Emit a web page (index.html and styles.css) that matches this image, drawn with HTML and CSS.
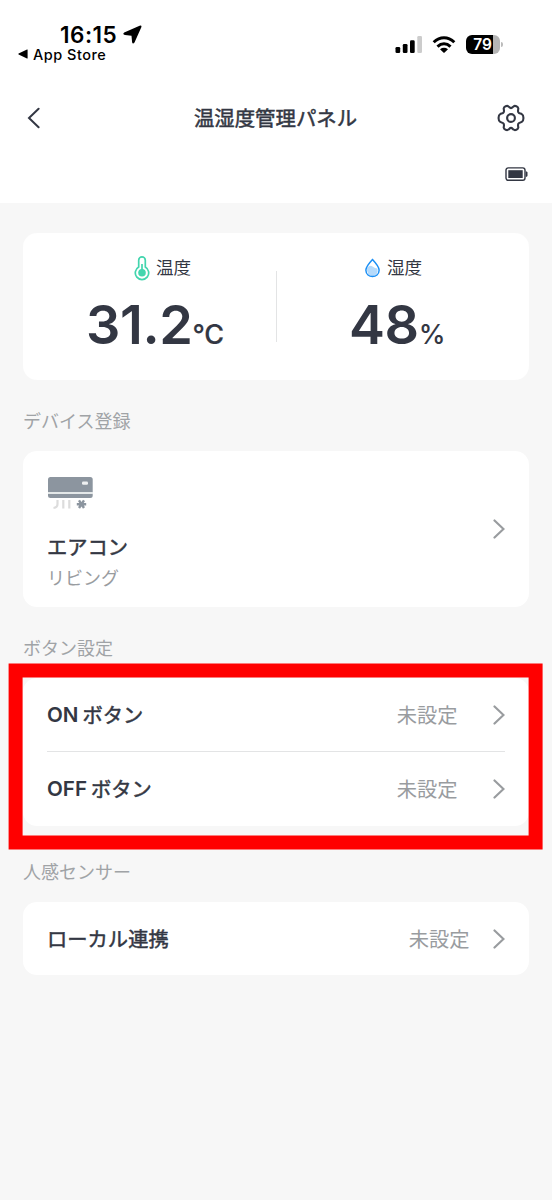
FILE: index.html
```html
<!DOCTYPE html>
<html lang="ja">
<head>
<meta charset="utf-8">
<meta name="viewport" content="width=device-width, initial-scale=1">
<title>温湿度管理パネル</title>
<link rel="stylesheet" href="styles.css">
</head>
<body>
<div class="screen">
  <header class="header">
    <div class="status">
      <div class="status-left">
        <div class="clock"><span class="clock-time">16:15</span>
          <svg class="location" width="19" height="19" viewBox="0 0 19 19"><path d="M16.600 0.800Q19.200 0 18.200 2.600L11.500 17.600Q9.700 19.800 9.100 17.200L8.500 10.800L2 10.100Q-0.900 9.200 1.200 7.500Z"/></svg>
        </div>
        <div class="back-app">
          <svg width="10" height="10" viewBox="0 0 10 10"><path d="M9.600 0.700V9.300Q9.600 9.700 9 9.400L0.600 5.400Q0 5 0.600 4.600L9 0.600Q9.600 0.300 9.600 0.700Z"/></svg>
          <span>App Store</span>
        </div>
      </div>
      <div class="status-right">
        <svg class="signal" width="28" height="18" viewBox="0 0 28 18"><rect x="0.500" y="11" width="4.700" height="6" rx="1.300"/><rect x="7.800" y="8" width="4.700" height="9" rx="1.300"/><rect x="15" y="4.300" width="4.700" height="12.700" rx="1.300"/><rect class="faint" x="22.300" y="0" width="4.700" height="17" rx="1.300"/></svg>
        <svg class="wifi" width="24" height="18" viewBox="0 0 24 18"><path class="arc" d="M1.700 6.300Q6.400 1.700 12 1.700T22.300 6.300M5.500 10.600Q8.500 7.700 12 7.700T18.500 10.600"/><path d="M8 13.200Q12 10.400 16 13.200L12.600 16.600Q12 17.100 11.400 16.600Z"/></svg>
        <div class="phone-battery"><span class="phone-battery-body">79</span><span class="phone-battery-tip"></span></div>
      </div>
    </div>
    <nav class="nav">
      <svg class="back" width="14" height="24" viewBox="0 0 14 24"><path d="M12.600 2.800L3 12L12.600 21.200"/></svg>
      <h1 class="title">温湿度管理パネル</h1>
      <svg class="gear" width="28" height="28" viewBox="0 0 28 28"><path d="M11.300 2.400C12.600 3 12.500 4.100 14 4.100S15.400 3 16.700 2.400C18 1.200 21 2.600 21.300 4.400C21.300 5.800 20.600 6.300 21.300 8.200C22.200 9.800 23.600 9.300 24.800 10.100C27 11.300 27 16.700 24.800 17.900C23.600 18.700 22.200 18.200 21.300 19.800C20.600 21.700 21.300 22.200 21.300 23.600C21 25.400 18 26.800 16.700 25.600C15.400 25 15.500 23.900 14 23.900S12.600 25 11.300 25.600C10 26.800 7 25.400 6.700 23.600C6.700 22.200 7.400 21.700 6.700 19.800C5.800 18.200 4.400 18.700 3.200 17.900C1 16.700 1 11.300 3.200 10.100C4.400 9.300 5.800 9.800 6.700 8.200C7.400 6.300 6.700 5.800 6.700 4.400C7 2.600 10 1.200 11.300 2.400Z"/><circle cx="14" cy="14" r="3.900"/></svg>
    </nav>
    <div class="device-status">
      <svg width="23" height="14" viewBox="0 0 23 14"><rect class="shell" x="1" y="0.900" width="19" height="12.400" rx="2.200"/><rect class="charge" x="3.300" y="3.200" width="14.400" height="7.800"/><path class="charge" d="M20.800 4.300Q22.500 4.500 22.500 5.500V8.700Q22.500 9.700 20.800 9.900Z"/></svg>
    </div>
  </header>

  <main class="content">
    <section class="card readings">
      <div class="reading temp">
        <div class="reading-label">
          <svg width="16" height="25" viewBox="0 0 16 25"><path class="green-line" d="M4.700 11V4.200A3.300 3.300 0 0 1 11.300 4.200V11A6.700 6.700 0 1 1 4.700 11Z"/><circle class="green-fill" cx="8" cy="16.700" r="3.800"/><path class="green-line" d="M8 8V15"/></svg>
          <span>温度</span>
        </div>
        <div class="value"><span class="number">31.2</span><span class="unit">°C</span></div>
      </div>
      <div class="reading humid">
        <div class="reading-label">
          <svg width="15" height="20" viewBox="0 0 15 20"><path class="water" d="M2 10Q5 6.500 7.500 8.500T12.500 10.500Q13.500 17.500 7.500 18Q1.500 17.500 2 10Z"/><path class="drop" d="M7.500 1.500Q14.300 8.800 14.100 12.200C13.900 20.500 1.100 20.500 .9 12.200Q.7 8.800 7.500 1.500Z"/></svg>
          <span>湿度</span>
        </div>
        <div class="value"><span class="number">48</span><span class="unit">%</span></div>
      </div>
    </section>

    <h2 class="section-title">デバイス登録</h2>
    <section class="card device">
      <div>
        <svg class="aircon" width="46" height="34" viewBox="0 0 46 34"><rect class="ac-body" x="0" y="0" width="44.700" height="21" rx="2.500"/><path class="ac-stripe" d="M0 16H45"/><rect class="ac-light" x="34" y="4.600" width="6" height="3.200" rx="1.300"/><path class="ac-wind" d="M9.500 23V27Q9.500 30.600 5.500 31M15.300 23V31.500M21.300 23V31.500"/><path class="ac-snow" d="M28.800 27.200H38.200M31 23.400L36 31M36 23.400L31 31"/></svg>
        <div class="device-name strong">エアコン</div>
        <div class="device-room">リビング</div>
      </div>
      <svg class="chevron" width="12" height="20" viewBox="0 0 12 20"><path d="M1.500 1.500L10.500 10L1.500 18.500"/></svg>
    </section>

    <h2 class="section-title">ボタン設定</h2>
    <section class="card list highlighted">
      <div class="row"><span class="strong"><span class="latin">ON</span>ボタン</span><span class="row-value">未設定</span><svg class="chevron" width="12" height="20" viewBox="0 0 12 20"><path d="M1.500 1.500L10.500 10L1.500 18.500"/></svg></div>
      <div class="row"><span class="strong"><span class="latin">OFF</span>ボタン</span><span class="row-value">未設定</span><svg class="chevron" width="12" height="20" viewBox="0 0 12 20"><path d="M1.500 1.500L10.500 10L1.500 18.500"/></svg></div>
      <svg class="highlight" width="536" height="188" viewBox="0 0 536 188"><rect x="8.600" y="8.500" width="520" height="172"/></svg>
    </section>

    <h2 class="section-title">人感センサー</h2>
    <section class="card list single">
      <div class="row"><span class="strong">ローカル連携</span><span class="row-value">未設定</span><svg class="chevron" width="12" height="20" viewBox="0 0 12 20"><path d="M1.500 1.500L10.500 10L1.500 18.500"/></svg></div>
    </section>
  </main>
</div>
</body>
</html>
```
FILE: styles.css
```css
* { box-sizing: border-box; }
body { margin: 0; background: #f7f7f7; color: #333743; font-family: Inter, "Noto Sans CJK JP", sans-serif; }
svg { display: block; flex: none; }
.screen { width: 552px; height: 1200px; overflow: hidden; background: #f7f7f7; }

.header { height: 203px; background: #fff; }
.status { display: flex; justify-content: space-between; height: 80px; padding: 22px 49px 0 18px; color: #000; }
.clock { display: flex; align-items: center; height: 25px; padding-left: 42px; }
.clock-time { font-size: 22.5px; font-weight: 600; letter-spacing: 0.5px; width: 63px; line-height: 25px; }
.back-app { display: flex; align-items: center; gap: 5px; height: 16px; margin-top: -1px; font-size: 14.5px; font-weight: 500; letter-spacing: 0.5px; }
.status-right { display: flex; align-items: flex-start; padding-top: 14px; }
.signal .faint { fill: #ccc; }
.wifi { margin-left: 9px; }
.wifi .arc { fill: none; stroke: #000; stroke-width: 3; }
.phone-battery { display: flex; align-items: center; margin: -1px 0 0 10px; }
.phone-battery-body { width: 34px; height: 19px; padding-right: 1px; border-radius: 6px; background: linear-gradient(90deg, #000 27px, #b5b5b5 27px); color: #fff; font-size: 15.5px; font-weight: 600; line-height: 20px; text-align: center; }
.phone-battery-tip { width: 2px; height: 5px; margin-left: 1px; border-radius: 0 2px 2px 0; background: #bbb; }

.nav { display: flex; align-items: center; justify-content: space-between; height: 76px; padding: 0 27px 0 26px; }
.back { margin-right: 14px; }
.back path { fill: none; stroke: #333743; stroke-width: 2; stroke-linecap: round; }
.title { margin: 0; font-size: 20.400px; line-height: 30px; font-weight: 400; -webkit-text-stroke: 0.500px #333743; padding-top: 1px; }
.gear path, .gear circle { fill: none; stroke: #333743; stroke-width: 2.100; }
.device-status { display: flex; justify-content: flex-end; padding: 11px 24px 0 0; }
.shell { fill: none; stroke: #333743; stroke-width: 1.400; }
.charge { fill: #333743; }

.content { padding: 30px 23px 0; }
.card { width: 506px; border-radius: 14px; background: #fff; }
.readings { display: flex; height: 147px; background: linear-gradient(#e3e4e5, #e3e4e5) 253px 38px / 1px 71px no-repeat #fff; }
.reading { width: 253px; padding-top: 22px; }
.reading-label { display: flex; align-items: center; height: 26px; gap: 6.500px; padding-left: 110.500px; font-size: 17.600px; }
.reading-label span { margin-top: -3px; }
.humid .reading-label { padding-left: 89px; gap: 7px; }
.value { display: flex; align-items: baseline; padding-left: 63px; margin-top: 11px; line-height: 66px; }
.humid .value { padding-left: 73px; }
.number { font-size: 54px; font-weight: 600; letter-spacing: -0.400px; }
.unit { font-size: 27px; font-weight: 500; }
.temp .unit { letter-spacing: -0.300px; -webkit-text-stroke: 0.200px #333743; }
.green-line { fill: none; stroke: #43d5ae; stroke-width: 1.700; }
.green-fill { fill: #43d5ae; }
.drop { fill: none; stroke: #1b8ff5; stroke-width: 1.500; }
.water { fill: #b5dafb; }

.section-title { margin: 0; height: 71px; line-height: 83px; font-size: 18px; font-weight: 400; color: #a0a3a6; }
.device { display: flex; justify-content: space-between; align-items: flex-start; height: 156px; padding: 26px 24px 0 25px; }
.ac-body { fill: #8c959f; }
.ac-stripe { stroke: #e4e8e9; stroke-width: 2; }
.ac-light { fill: #eef0f1; }
.ac-wind { fill: none; stroke: #dcdcdc; stroke-width: 2.200; }
.ac-snow { stroke: #8c959f; stroke-width: 2.400; }
.device-name { margin: 21px 0 0 -1px; line-height: 32px; }
.device-room { margin-left: -1px; font-size: 18px; line-height: 29px; color: #999c9f; }
.device .chevron { margin-top: 42px; }
.strong { font-size: 20.300px; -webkit-text-stroke: 0.500px #333743; }
.latin { font-size: 20.600px; font-weight: 600; margin-right: 4px; vertical-align: 1px; line-height: 1; -webkit-text-stroke: 0; }
.chevron path { fill: none; stroke: #999c9f; stroke-width: 2.200; stroke-linecap: round; }

.list { padding: 0 24px; }
.row { display: flex; align-items: center; height: 74px; }
.row > span { padding-bottom: 3px; }
.row + .row { box-shadow: 0 -1px #e3e4e5; }
.row-value { margin-left: auto; margin-right: 35.500px; font-size: 20.300px; color: #999c9f; }
.single .row { height: 73px; }
.single .row > span { padding-bottom: 2px; }
.single .row-value { margin-right: 23.500px; }
.highlighted { position: relative; height: 148px; margin-bottom: 5px; }
.highlight { position: absolute; left: -16px; top: -16px; }
.highlight rect { fill: none; stroke: #f00; stroke-width: 14; }
```
